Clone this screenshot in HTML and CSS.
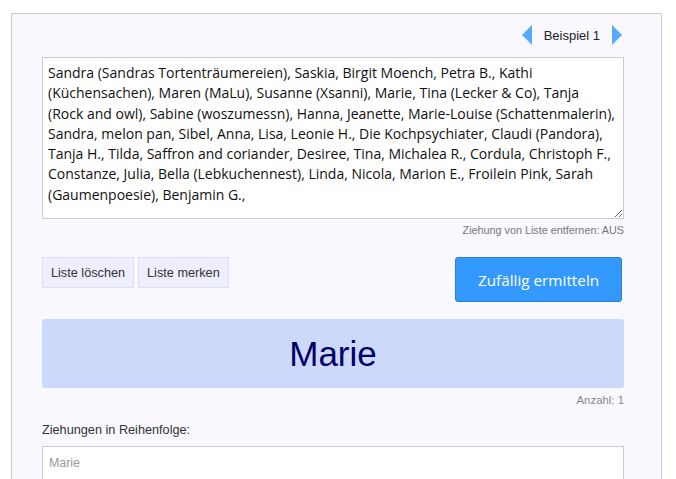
FILE: index.html
```html
<!DOCTYPE html>
<html lang="de">
<head>
<meta charset="utf-8">
<title>Zufallsgenerator</title>
<link rel="stylesheet" href="styles.css">
</head>
<body>
<div class="card">
  <div class="nav">
    <svg class="arrow" width="10" height="20" viewBox="0 0 10 20"><polygon points="10,0 10,20 0,10" fill="#55aaff"/></svg>
    <span class="nav-label">Beispiel 1</span>
    <svg class="arrow" width="10" height="20" viewBox="0 0 10 20"><polygon points="0,0 0,20 10,10" fill="#55aaff"/></svg>
  </div>
  <textarea class="names">Sandra (Sandras Tortenträumereien), Saskia, Birgit Moench, Petra B., Kathi (Küchensachen), Maren (MaLu), Susanne (Xsanni), Marie, Tina (Lecker &amp; Co), Tanja (Rock and owl), Sabine (woszumessn), Hanna, Jeanette, Marie-Louise (Schattenmalerin), Sandra, melon pan, Sibel, Anna, Lisa, Leonie H., Die Kochpsychiater, Claudi (Pandora), Tanja H., Tilda, Saffron and coriander, Desiree, Tina, Michalea R., Cordula, Christoph F., Constanze, Julia, Bella (Lebkuchennest), Linda, Nicola, Marion E., Froilein Pink, Sarah (Gaumenpoesie), Benjamin G.,</textarea>
  <div class="hint">Ziehung von Liste entfernen: AUS</div>
  <div class="actions">
    <div class="small-buttons">
      <button class="btn-light">Liste löschen</button>
      <button class="btn-light">Liste merken</button>
    </div>
    <button class="btn-primary">Zufällig ermitteln</button>
  </div>
  <div class="result">Marie</div>
  <div class="count">Anzahl: 1</div>
  <div class="label">Ziehungen in Reihenfolge:</div>
  <div class="history">Marie</div>
</div>
</body>
</html>
```
FILE: styles.css
```css
html, body {
  margin: 0;
  padding: 0;
  background: #ffffff;
  font-family: "Liberation Sans", Arial, sans-serif;
}
.card {
  margin: 13px 0 0 11px;
  width: 651px;
  border: 1px solid #cccccc;
  border-bottom: none;
  background: #f8f8fe;
  padding: 11px 30px 40px 30px;
  box-sizing: border-box;
  height: 480px;
  overflow: hidden;
}
.nav {
  display: flex;
  justify-content: flex-end;
  align-items: center;
  gap: 12px;
  height: 20px;
  padding-right: 9px;
}
.arrow { display: block; }
.nav-label {
  font-size: 13px;
  color: #222222;
}
.names {
  display: block;
  margin-top: 12px;
  width: 582px;
  height: 162px;
  box-sizing: border-box;
  border: 1px solid #cccccc;
  background: #ffffff;
  padding: 5px 5px;
  font-family: "Open Sans", sans-serif;
  font-size: 14px;
  line-height: 20.3px;
  color: #111111;
  resize: vertical;
  overflow: hidden;
}
.hint {
  text-align: right;
  font-size: 10.8px;
  color: #777777;
  margin-top: 5px;
  width: 582px;
}
.actions {
  display: flex;
  justify-content: space-between;
  align-items: flex-start;
  width: 582px;
  margin-top: 21px;
}
.small-buttons {
  display: flex;
  gap: 4px;
}
.btn-light {
  font-family: "Liberation Sans", Arial, sans-serif;
  font-size: 12.7px;
  color: #333333;
  background: #eeeefd;
  border: 1px solid #ddddf8;
  height: 31px;
  padding: 0 8px;
  border-radius: 0;
}
.btn-primary {
  font-family: "Open Sans", sans-serif;
  font-size: 15.3px;
  color: #ffffff;
  background: #3399ff;
  border: 1px solid #2a7fd4;
  border-radius: 3px;
  width: 167px;
  height: 45px;
  margin-right: 2px;
}
.result {
  margin-top: 17px;
  width: 582px;
  height: 69px;
  background: #ccd9fb;
  border-radius: 3px;
  display: flex;
  align-items: center;
  justify-content: center;
  font-size: 35px;
  color: #000066;
}
.count {
  width: 582px;
  text-align: right;
  font-size: 11.4px;
  color: #888888;
  margin-top: 6px;
}
.label {
  font-size: 12.7px;
  color: #333333;
  margin-top: 17px;
}
.history {
  margin-top: 9px;
  width: 582px;
  height: 60px;
  box-sizing: border-box;
  border: 1px solid #cccccc;
  background: #ffffff;
  padding: 9px 6px;
  font-size: 12.4px;
  color: #999999;
}
```
